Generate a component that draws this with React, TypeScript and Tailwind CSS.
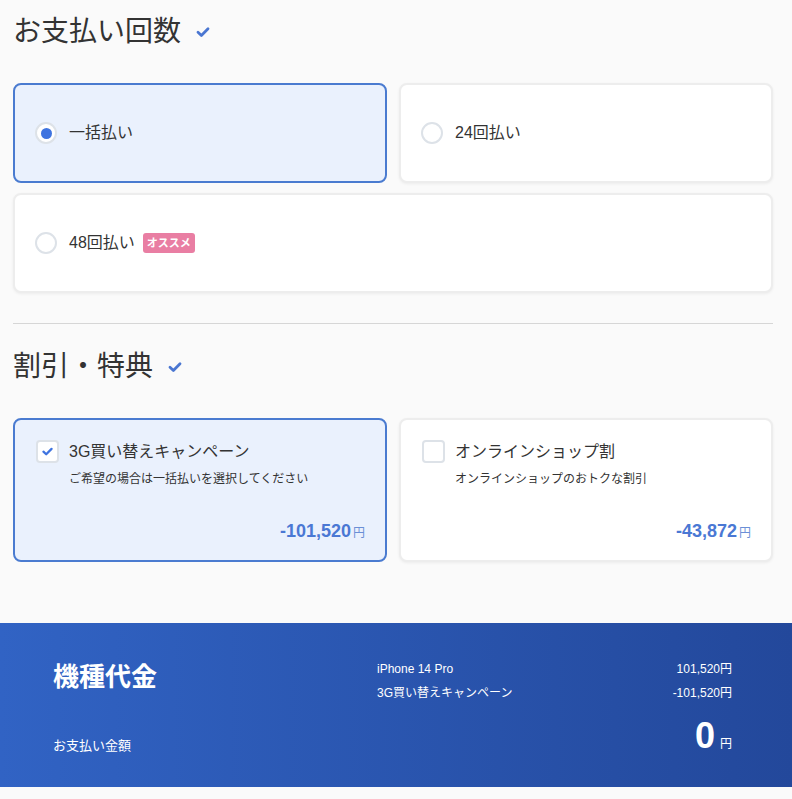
import React from "react";

const FONT = {
  fontFamily: '"Liberation Sans", "Noto Sans CJK JP", sans-serif',
};

function CheckMark({ className }: { className?: string }) {
  return (
    <svg viewBox="0 0 16 16" className={className} fill="none">
      <path
        d="M3 8.2l3.4 3.2L13 4.8"
        stroke="currentColor"
        strokeWidth="2.8"
        strokeLinecap="round"
        strokeLinejoin="round"
      />
    </svg>
  );
}

function SectionTitle({ children }: { children: React.ReactNode }) {
  return (
    <div className="flex items-center h-9">
      <h2 className="text-[28px] leading-9 text-[#333]">{children}</h2>
      <CheckMark className="w-[16px] h-[16px] ml-[14px] -mt-[1px] text-[#4a76d1]" />
    </div>
  );
}

function Radio({ checked }: { checked: boolean }) {
  return (
    <span className="w-[22px] h-[22px] rounded-full border-2 border-[#dde2e8] bg-white flex items-center justify-center shrink-0">
      {checked && <span className="w-[11px] h-[11px] rounded-full bg-[#3f74e0]" />}
    </span>
  );
}

function PayOption({
  label,
  checked,
  badge,
  wide,
}: {
  label: string;
  checked?: boolean;
  badge?: string;
  wide?: boolean;
}) {
  return (
    <div
      className={
        "h-[100px] rounded-lg flex items-center px-[20px] gap-3 " +
        (wide ? "col-span-2 " : "") +
        (checked
          ? "border-2 border-[#4a7bd0] bg-[#eaf1fd]"
          : "border-2 border-[#ededed] bg-white shadow-[0_1px_3px_rgba(0,0,0,0.06)]")
      }
    >
      <Radio checked={!!checked} />
      <span className="text-[16px] text-[#333]">{label}</span>
      {badge && (
        <span className="-ml-[4px] bg-[#e97ea3] text-white text-[11px] font-bold rounded-[3px] px-1 h-5 leading-5">
          {badge}
        </span>
      )}
    </div>
  );
}

function DiscountCard({
  title,
  sub,
  price,
  checked,
}: {
  title: string;
  sub: string;
  price: string;
  checked?: boolean;
}) {
  return (
    <div
      className={
        "h-[144px] rounded-lg flex flex-col pl-[21px] pr-[20px] pt-[20px] pb-[15px] " +
        (checked
          ? "border-2 border-[#4a7bd0] bg-[#eaf1fd]"
          : "border-2 border-[#ededed] bg-white shadow-[0_1px_3px_rgba(0,0,0,0.06)]")
      }
    >
      <div className="flex items-start gap-[10px]">
        <span className="w-[23px] h-[23px] rounded-[4px] border-2 border-[#dde2e8] bg-white flex items-center justify-center shrink-0">
          {checked && <CheckMark className="w-[13px] h-[13px] text-[#3f74e0]" />}
        </span>
        <div className="flex flex-col">
          <span className="text-[16px] leading-[24px] text-[#333]">{title}</span>
          <span className="text-[12px] leading-[18px] mt-[6px] text-[#333]">{sub}</span>
        </div>
      </div>
      <div className="mt-auto flex items-baseline justify-end">
        <span className="text-[18px] font-bold text-[#4a78d4]">{price}</span>
        <span className="text-[12px] text-[#6b8fd6] ml-[2px]">円</span>
      </div>
    </div>
  );
}

export default function App() {
  return (
    <div className="min-h-screen bg-[#fafafa] pb-3" style={FONT}>
      <div className="px-[13px] w-[786px] pt-[14px]">
        <SectionTitle>お支払い回数</SectionTitle>
        <div className="grid grid-cols-2 gap-x-3 gap-y-[10px] mt-[33px]">
          <PayOption label="一括払い" checked />
          <PayOption label="24回払い" />
          <PayOption label="48回払い" badge="オススメ" wide />
        </div>
        <div className="h-px bg-[#d6d6d6] mt-[30px] mb-[25px]" />
        <SectionTitle>割引・特典</SectionTitle>
        <div className="grid grid-cols-2 gap-x-3 mt-[33px]">
          <DiscountCard
            title="3G買い替えキャンペーン"
            sub="ご希望の場合は一括払いを選択してください"
            price="-101,520"
            checked
          />
          <DiscountCard
            title="オンラインショップ割"
            sub="オンラインショップのおトクな割引"
            price="-43,872"
          />
        </div>
      </div>
      <div className="mt-[61px] h-[164px] bg-gradient-to-r from-[#3163c4] to-[#23489b] pl-[53px] pr-[60px] pt-[36px] pb-[31px] flex text-white">
        <div className="w-[324px] flex flex-col justify-between">
          <span className="text-[26px] font-bold leading-9">機種代金</span>
          <span className="text-[13px] leading-5">お支払い金額</span>
        </div>
        <div className="flex-1 flex flex-col -mt-[2px]">
          <div className="flex justify-between text-[12px] leading-6">
            <span>iPhone 14 Pro</span>
            <span>101,520円</span>
          </div>
          <div className="flex justify-between text-[12px] leading-6">
            <span>3G買い替えキャンペーン</span>
            <span>-101,520円</span>
          </div>
          <div className="flex justify-end items-baseline mt-auto">
            <span className="text-[36px] font-bold leading-10">0</span>
            <span className="text-[12px] ml-[5px]">円</span>
          </div>
        </div>
      </div>
    </div>
  );
}
